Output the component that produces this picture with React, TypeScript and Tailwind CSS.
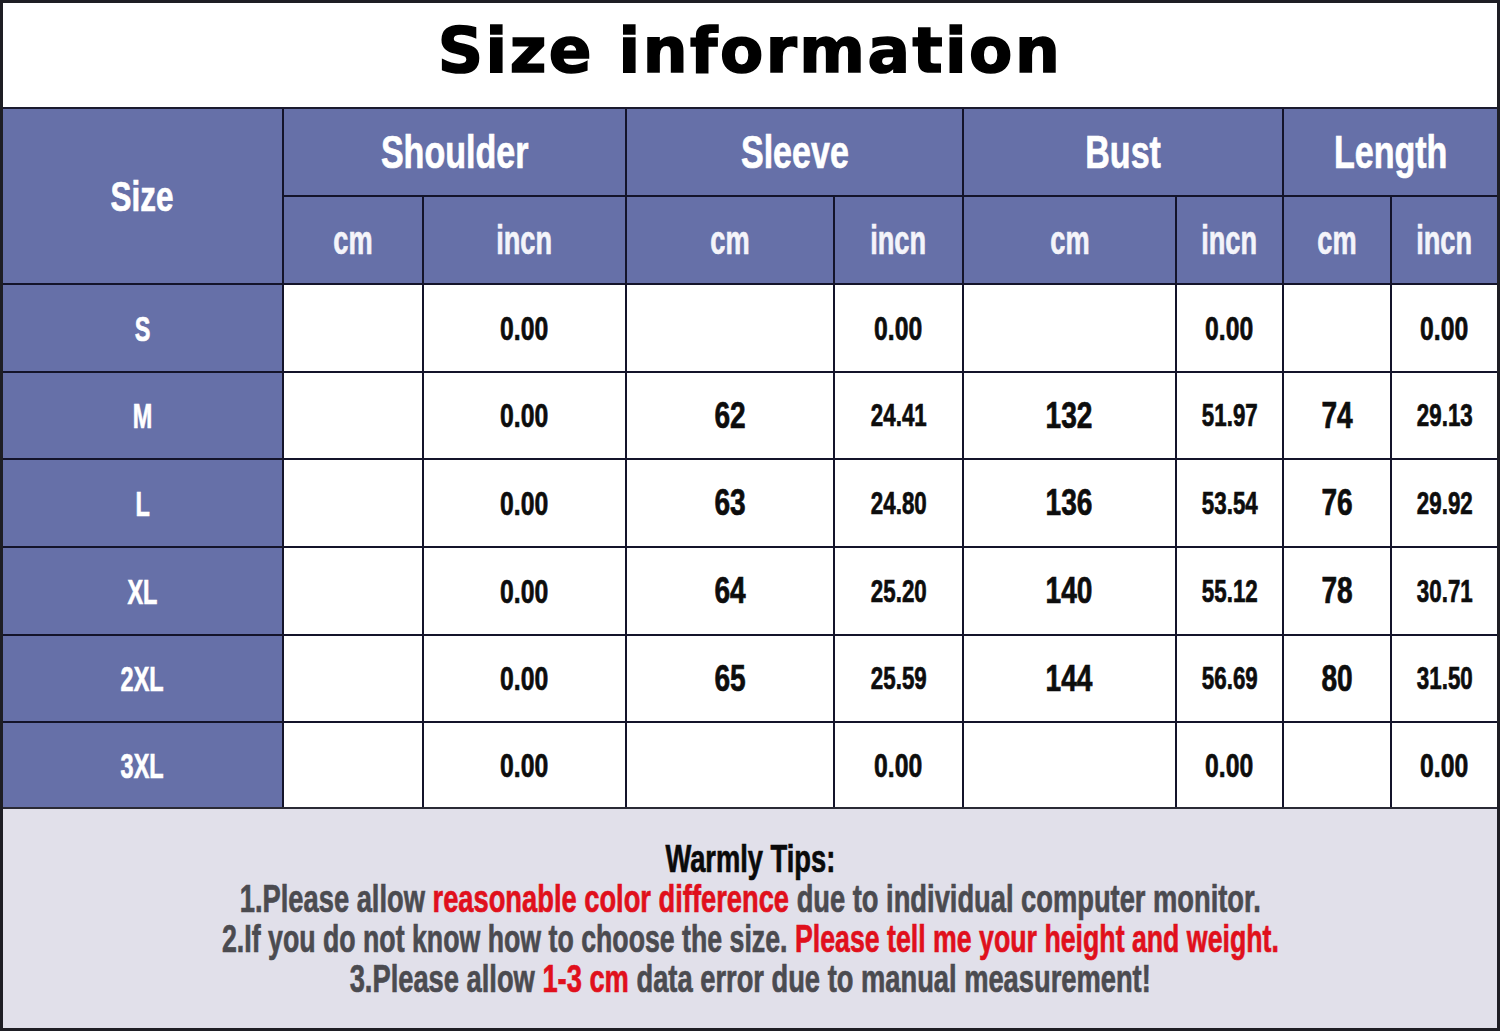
import React from 'react'

const condensed = { fontFamily: '"Liberation Sans", Arial, sans-serif' }

const rows = [
  { size: 'S', cells: ['', '0.00', '', '0.00', '', '0.00', '', '0.00'], h: 'h-[86px]' },
  { size: 'M', cells: ['', '0.00', '62', '24.41', '132', '51.97', '74', '29.13'], h: 'h-[85px]' },
  { size: 'L', cells: ['', '0.00', '63', '24.80', '136', '53.54', '76', '29.92'], h: 'h-[86px]' },
  { size: 'XL', cells: ['', '0.00', '64', '25.20', '140', '55.12', '78', '30.71'], h: 'h-[86px]' },
  { size: '2XL', cells: ['', '0.00', '65', '25.59', '144', '56.69', '80', '31.50'], h: 'h-[85px]' },
  { size: '3XL', cells: ['', '0.00', '', '0.00', '', '0.00', '', '0.00'], h: 'h-[84px]' },
]

const groups = ['Shoulder', 'Sleeve', 'Bust', 'Length']

// the chart uses an Impact-like face; squeeze Arial-width text horizontally
const Narrow = ({ children, className = '' }: { children: React.ReactNode; className?: string }) => (
  <span className={'inline-block whitespace-nowrap [-webkit-text-stroke:0.7px] ' + className}>{children}</span>
)

const numClass = (c: string) => {
  if (c === '0.00') return 'text-[33px] scale-x-[0.75]'
  if (c.length > 3) return 'text-[31px] scale-x-[0.72]'
  return 'text-[36px] scale-x-[0.78]'
}

export default function App() {
  return (
    <div className="w-[1500px] h-[1031px] border-[3px] border-[#1e1e24] bg-white flex flex-col overflow-hidden">
      <div className="h-[106px] flex items-center justify-center pb-[10px] border-b-2 border-[#1a1a2e]">
        <h1
          className="text-[63px] font-bold text-black tracking-[2.5px] leading-none [-webkit-text-stroke:1.6px]"
          style={{ fontFamily: '"DejaVu Sans", Verdana, sans-serif' }}
        >
          Size information
        </h1>
      </div>

      <div
        className="grid grid-cols-[279px_138px_201px_206px_127px_211px_105px_106px_105px] gap-[2px] bg-[#14142a] font-bold leading-none"
        style={condensed}
      >
        <div className="row-span-2 bg-[#6670a8] flex items-center justify-center text-white text-[43px]">
          <Narrow className="scale-x-[0.73]">Size</Narrow>
        </div>
        {groups.map((g) => (
          <div
            key={g}
            className="col-span-2 h-[86px] bg-[#6670a8] flex items-center justify-center text-white text-[46px]"
          >
            <Narrow className="scale-x-[0.74]">{g}</Narrow>
          </div>
        ))}
        {groups.map((g) => (
          <React.Fragment key={g + '-units'}>
            <div className="h-[86px] bg-[#6670a8] flex items-center justify-center text-[#f4f4fa] text-[40px]">
              <Narrow className="scale-x-[0.68]">cm</Narrow>
            </div>
            <div className="h-[86px] bg-[#6670a8] flex items-center justify-center text-[#f4f4fa] text-[40px]">
              <Narrow className="scale-x-[0.68]">incn</Narrow>
            </div>
          </React.Fragment>
        ))}
        {rows.map((r) => (
          <React.Fragment key={r.size}>
            <div className={`${r.h} bg-[#6670a8] flex items-center justify-center text-white text-[35px]`}>
              <Narrow className="scale-x-[0.67]">{r.size}</Narrow>
            </div>
            {r.cells.map((c, i) => (
              <div key={i} className={`${r.h} bg-white flex items-center justify-center text-[#0d0d0d]`}>
                {c && <Narrow className={numClass(c)}>{c}</Narrow>}
              </div>
            ))}
          </React.Fragment>
        ))}
      </div>

      <div
        className="flex-1 border-t-2 border-[#2a2a35] bg-[#e1e0ea] flex flex-col items-center justify-center font-bold text-[39px] leading-[40px] text-[#4b4b50]"
        style={condensed}
      >
        <Narrow className="text-[#0a0a0a] scale-x-[0.7]">Warmly Tips:</Narrow>
        <Narrow className="scale-x-[0.7]">
          1.Please allow <span className="text-[#e0101c]">reasonable color difference</span> due to individual
          computer monitor.
        </Narrow>
        <Narrow className="scale-x-[0.685]">
          2.If you do not know how to choose the size.{' '}
          <span className="text-[#e0101c]">Please tell me your height and weight.</span>
        </Narrow>
        <Narrow className="scale-x-[0.7]">
          3.Please allow <span className="text-[#e0101c]">1-3 cm</span> data error due to manual measurement!
        </Narrow>
      </div>
    </div>
  )
}
